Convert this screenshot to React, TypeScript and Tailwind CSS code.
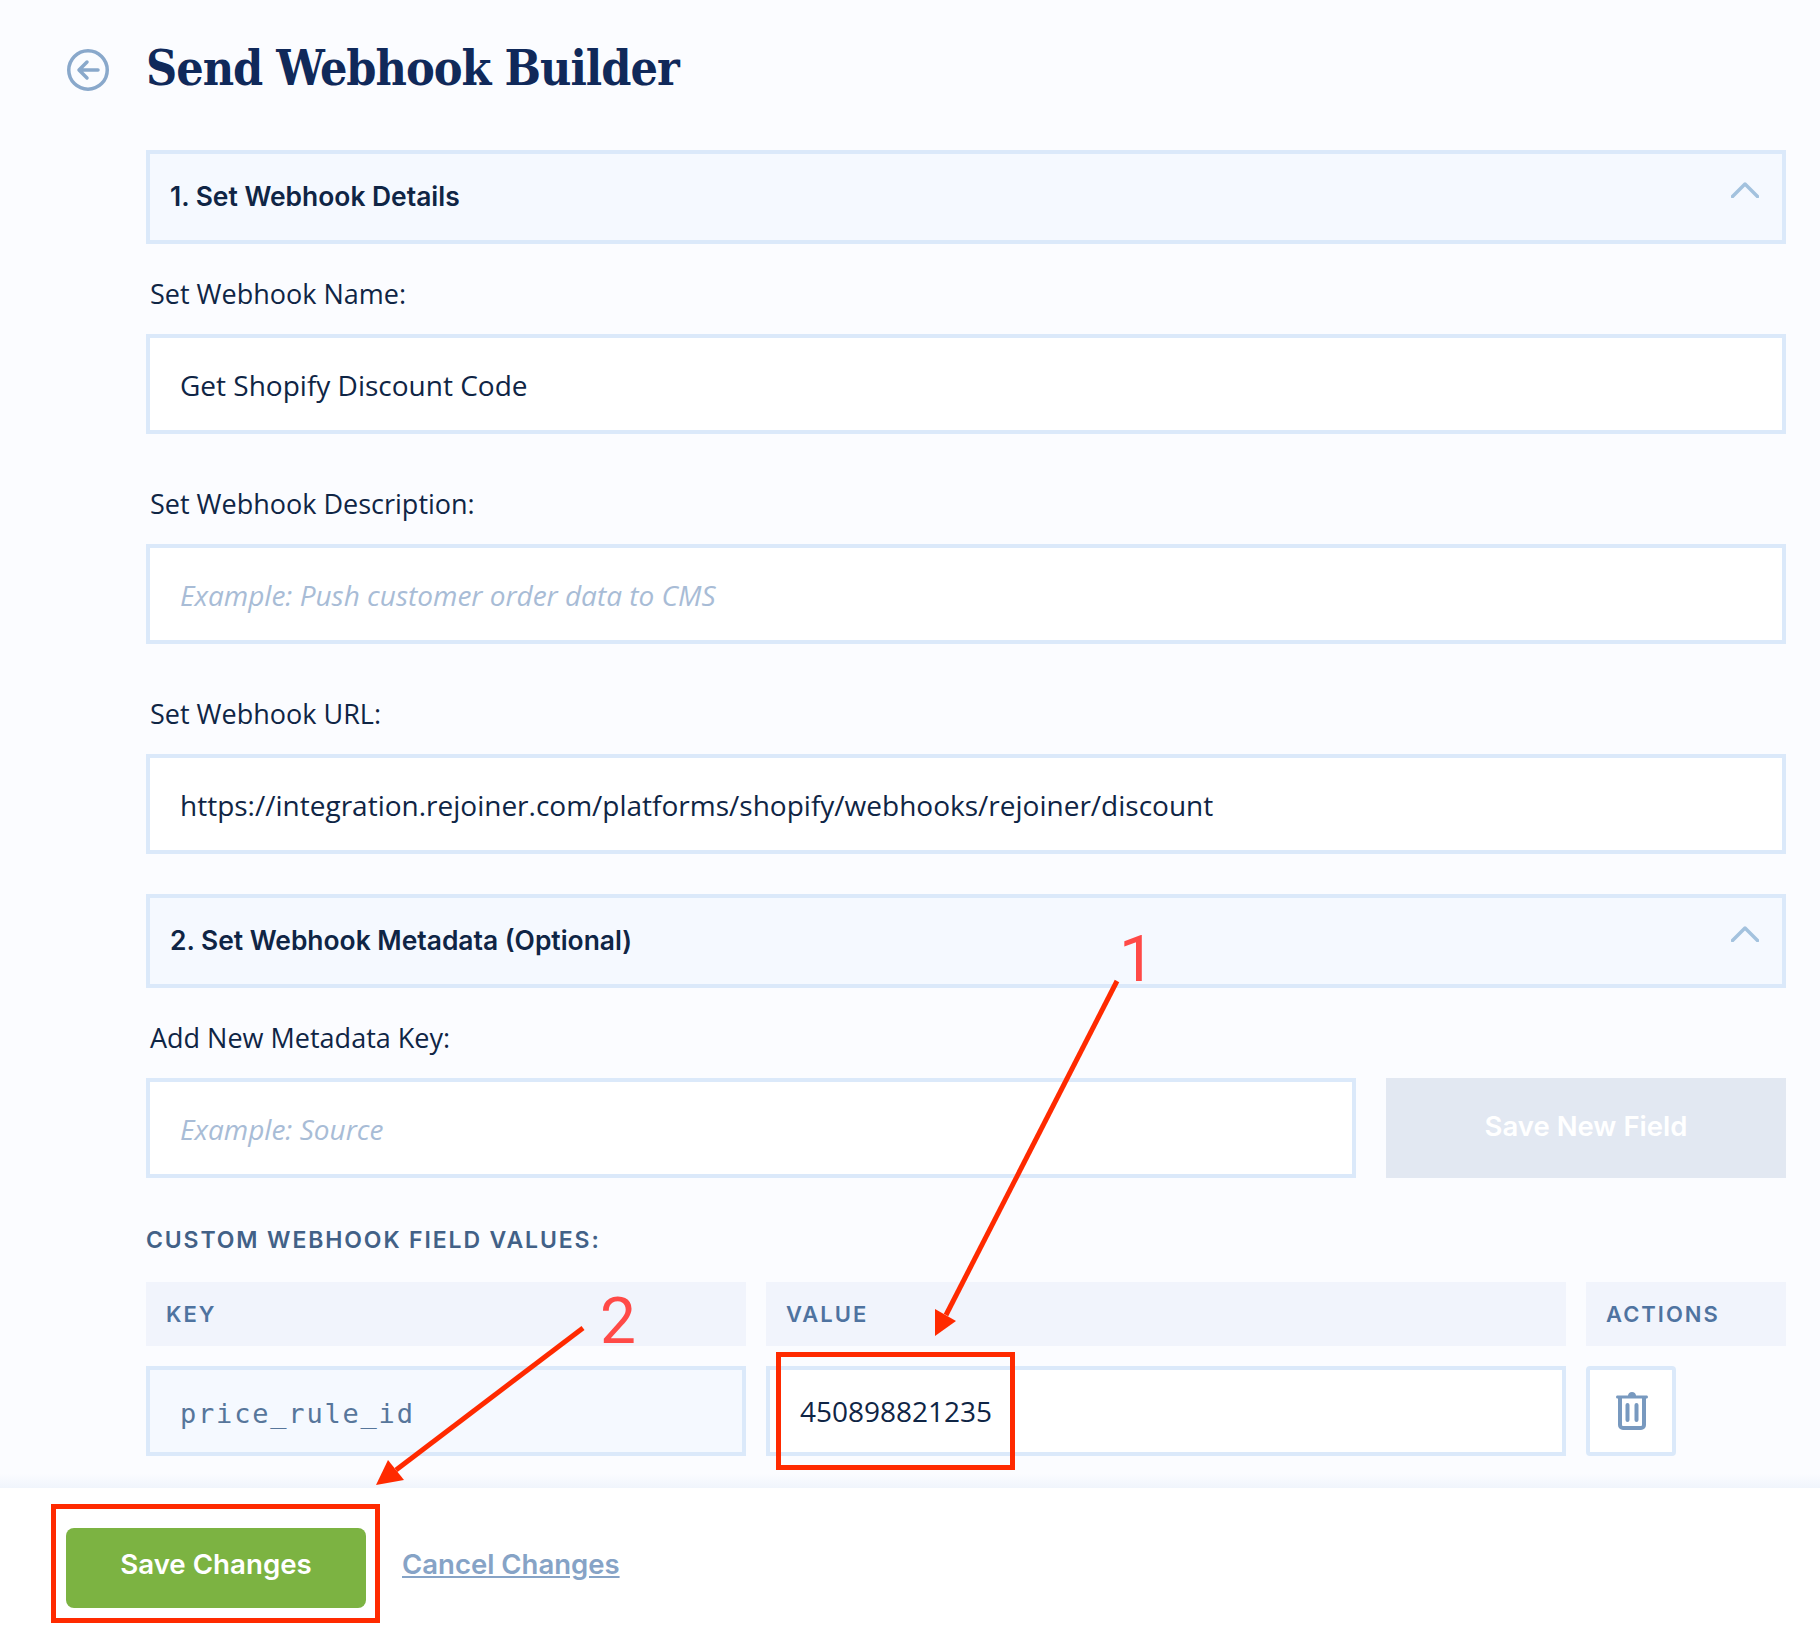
import { ChangeEvent, useState } from "react";

const sans = "font-['Open_Sans',sans-serif]";
const ui = "font-['Inter',sans-serif]";

function Chevron() {
  return (
    <svg width="28" height="16" viewBox="0 0 28 16" fill="none" className="mb-[14px]">
      <path d="M1.500 14.500L14 2l12.500 12.500" stroke="#a3c2de" strokeWidth="3.500" strokeLinecap="round" strokeLinejoin="round" />
    </svg>
  );
}

function SectionHeader({ title, className = "" }: { title: string; className?: string }) {
  return (
    <div className={`h-[94px] flex items-center justify-between border-4 border-[#dbe9fa] bg-[#f5f9ff] pl-[20px] pr-[23px] ${className}`}>
      <h2 className={`${ui} text-[26.400px] font-semibold text-[#0f2545]`}>{title}</h2>
      <Chevron />
    </div>
  );
}

function Field({ label, value, placeholder, className = "" }: { label: string; value?: string; placeholder?: string; className?: string }) {
  const [text, setText] = useState(value ?? "");
  return (
    <div className={className}>
      <label className={`${sans} block h-[36px] leading-[36px] mb-[22px] pl-[4px] text-[27px] text-[#0f2545]`}>{label}</label>
      <input
        value={text}
        placeholder={placeholder}
        onChange={(e: ChangeEvent<HTMLInputElement>) => setText(e.target.value)}
        className={`${sans} w-full h-[100px] border-4 border-[#dbe9fa] bg-white px-[30px] pt-[2px] text-[28px] text-[#0f2545] outline-none placeholder:italic placeholder:text-[#a8bcd6]`}
      />
    </div>
  );
}

function ColumnHead({ children, className = "" }: { children: string; className?: string }) {
  return (
    <div className={`${ui} h-[64px] flex items-center bg-[#f1f4fc] pl-[20px] text-[22px] font-semibold tracking-[2px] text-[#4f73a0] ${className}`}>
      {children}
    </div>
  );
}

function Annotations() {
  return (
    <>
      <svg className="absolute left-0 top-0 pointer-events-none" width="1820" height="1632" viewBox="0 0 1820 1632" fill="none">
        <path d="M1117 981L946 1315" stroke="#ff2a00" strokeWidth="5" />
        <path d="M935 1336L935 1309L956 1321Z" fill="#ff2a00" />
        <path d="M583 1328L396 1470" stroke="#ff2a00" strokeWidth="5" />
        <path d="M376 1485L388 1460L404 1480Z" fill="#ff2a00" />
      </svg>
      <div className="absolute left-[776px] top-[1352px] w-[239px] h-[118px] border-[5px] border-[#ff2a00]" />
      <div className="absolute left-[51px] top-[1504px] w-[329px] h-[119px] border-[5px] border-[#ff2a00]" />
      <span className="absolute left-[1119px] top-[924px] font-['Roboto',sans-serif] text-[64px] leading-[72px] text-[#ff4a47]">1</span>
      <span className="absolute left-[600px] top-[1286px] font-['Roboto',sans-serif] text-[64px] leading-[72px] text-[#ff4a47]">2</span>
    </>
  );
}

export default function App() {
  return (
    <div className="relative min-h-[1632px] w-[1820px] overflow-hidden bg-[#fbfcff] flex flex-col">
      <header className="h-[150px] flex items-start pl-[67px]">
        <button className="mt-[49px] mr-[37px] text-[#89a8cb]">
          <svg width="42" height="42" viewBox="0 0 42 42" fill="none" stroke="currentColor">
            <circle cx="21" cy="21" r="19.250" strokeWidth="3.500" />
            <path d="M31 21H13M20 13l-8 8 8 8" strokeWidth="3.500" strokeLinecap="round" strokeLinejoin="round" />
          </svg>
        </button>
        <h1 className="mt-[34px] font-['DejaVu_Serif_Condensed','DejaVu_Serif',serif] text-[48px] leading-[68px] font-bold tracking-[-1px] text-[#10295a]">Send Webhook Builder</h1>
      </header>

      <main className="pl-[146px] pr-[34px]">
        <SectionHeader title="1. Set Webhook Details" />
        <Field className="mt-[32px]" label="Set Webhook Name:" value="Get Shopify Discount Code" />
        <Field className="mt-[52px]" label="Set Webhook Description:" placeholder="Example: Push customer order data to CMS" />
        <Field className="mt-[52px]" label="Set Webhook URL:" value="https://integration.rejoiner.com/platforms/shopify/webhooks/rejoiner/discount" />

        <SectionHeader className="mt-[40px]" title="2. Set Webhook Metadata (Optional)" />

        <div className="mt-[32px] flex items-end gap-[30px]">
          <Field className="flex-1" label="Add New Metadata Key:" placeholder="Example: Source" />
          <button className={`${ui} w-[400px] h-[100px] bg-[#e2e8f2] pb-[2px] text-[27.500px] font-semibold text-white`}>Save New Field</button>
        </div>

        <h3 className={`${ui} mt-[48px] h-[28px] leading-[28px] text-[23px] font-semibold tracking-[1.875px] text-[#426187]`}>CUSTOM WEBHOOK FIELD VALUES:</h3>

        <div className="mt-[28px] grid grid-cols-[600px_800px_200px] gap-x-[20px] gap-y-[20px]">
          <ColumnHead>KEY</ColumnHead>
          <ColumnHead>VALUE</ColumnHead>
          <ColumnHead>ACTIONS</ColumnHead>

          <div className="h-[90px] flex items-center border-4 border-[#dbe9fa] bg-[#f5f9ff] pl-[30px] pt-[6px] font-['DejaVu_Sans_Mono',monospace] text-[27px] tracking-[1.800px] text-[#57769b]">price_rule_id</div>
          <div className={`${sans} h-[90px] flex items-center border-4 border-[#dbe9fa] bg-white pl-[30px] text-[28px] text-[#0f2545]`}>450898821235</div>
          <button className="w-[90px] h-[90px] flex items-center justify-center rounded-[4px] border-4 border-[#dbe9fa] bg-white pl-[2px] text-[#7899bf]">
            <svg width="32" height="38" viewBox="0 0 32 38" fill="none">
              <path d="M12 3.500C12 1.600 13.800 0 16 0s4 1.600 4 3.500h10.500c.8 0 1.500.7 1.500 1.500s-.7 1.500-1.500 1.500h-29C.7 6.500 0 5.800 0 5s.7-1.500 1.500-1.500H12z" fill="currentColor" />
              <path d="M4 6v27c0 1.700 1.300 3 3 3h18c1.700 0 3-1.300 3-3V6" stroke="currentColor" strokeWidth="4" />
              <path d="M11.500 13v15M20.500 13v15" stroke="currentColor" strokeWidth="4" strokeLinecap="round" />
            </svg>
          </button>
        </div>
      </main>

      <footer className="relative mt-[32px] h-[144px] flex items-center gap-[36px] bg-white pl-[66px] pt-[16px]">
        <div className="absolute left-0 right-0 -top-[14px] h-[14px] bg-gradient-to-b from-[#fbfcff] to-[#f0f5fc]" />
        <button className={`${ui} w-[300px] h-[80px] rounded-[8px] bg-[#7cb342] pb-[7px] text-[27.700px] font-semibold text-white`}>Save Changes</button>
        <a href="#" className={`${ui} mb-[7px] text-[27.500px] font-semibold text-[#86a3c6] underline`}>Cancel Changes</a>
      </footer>

      <Annotations />
    </div>
  );
}
